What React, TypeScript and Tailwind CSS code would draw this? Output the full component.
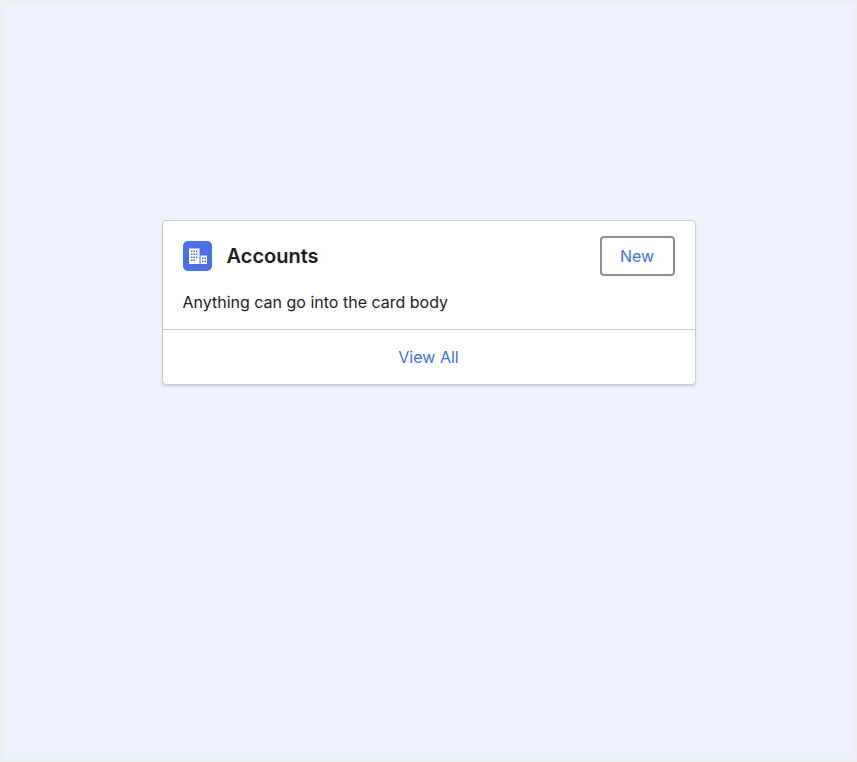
import React from 'react';

const AccountIcon: React.FC = () => (
  <svg viewBox="0 0 29 30" className="h-[30px] w-[29px] shrink-0 rounded-[5px] bg-[#4c6fe8]">
    <path fill="#fff" d="M6 7.500h10.500v15.500H6z" />
    <path fill="#fff" d="M17.500 14.500H24V23h-6.500z" />
    <g fill="#4c6fe8">
      <path d="M8 9.500h1.500V11H8zM10.500 9.500H12V11h-1.500zM13 9.500h1.500V11H13z" />
      <path d="M8 12.500h1.500V14H8zM10.500 12.500H12V14h-1.500zM13 12.500h1.500V14H13z" />
      <path d="M8 15.500h1.500V17H8zM10.500 15.500H12V17h-1.500zM13 15.500h1.500V17H13z" />
      <path d="M8 18.500h1.500V20H8zM10.500 18.500H12V20h-1.500z" />
      <path d="M19 16.500h1.500V18H19zM21.500 16.500H23V18h-1.500zM19 19.500h1.500V21H19zM21.500 19.500H23V21h-1.500z" />
    </g>
  </svg>
);

const App: React.FC = () => {
  return (
    <div className="h-[762px] w-[857px] border-[3px] border-[#efefef] bg-[#eef1fe] pt-[217px] font-['Inter',sans-serif] text-[#1c1c1c]">
      <div className="mx-auto w-[534px] rounded-[4px] border border-[#c9c9c9] bg-white shadow-[0_2px_2px_rgba(0,0,0,0.1)]">
        <div className="flex items-center justify-between px-5 pt-[15px]">
          <div className="flex items-center gap-[15px]">
            <AccountIcon />
            <h2 className="text-[20px] leading-[25px] font-semibold">Accounts</h2>
          </div>
          <button className="h-[40px] w-[75px] rounded-[4px] border-2 border-[#8e8e8e] bg-white text-[16px] text-[#3e6fe0]">
            New
          </button>
        </div>
        <p className="mt-[14px] h-[39px] px-5 text-[16px] leading-[24px]">Anything can go into the card body</p>
        <div className="flex h-[55px] items-center justify-center border-t border-[#c9c9c9] pb-[1px]">
          <a href="#" className="text-[16px] text-[#3e6fe0]">View All</a>
        </div>
      </div>
    </div>
  );
};

export default App;
